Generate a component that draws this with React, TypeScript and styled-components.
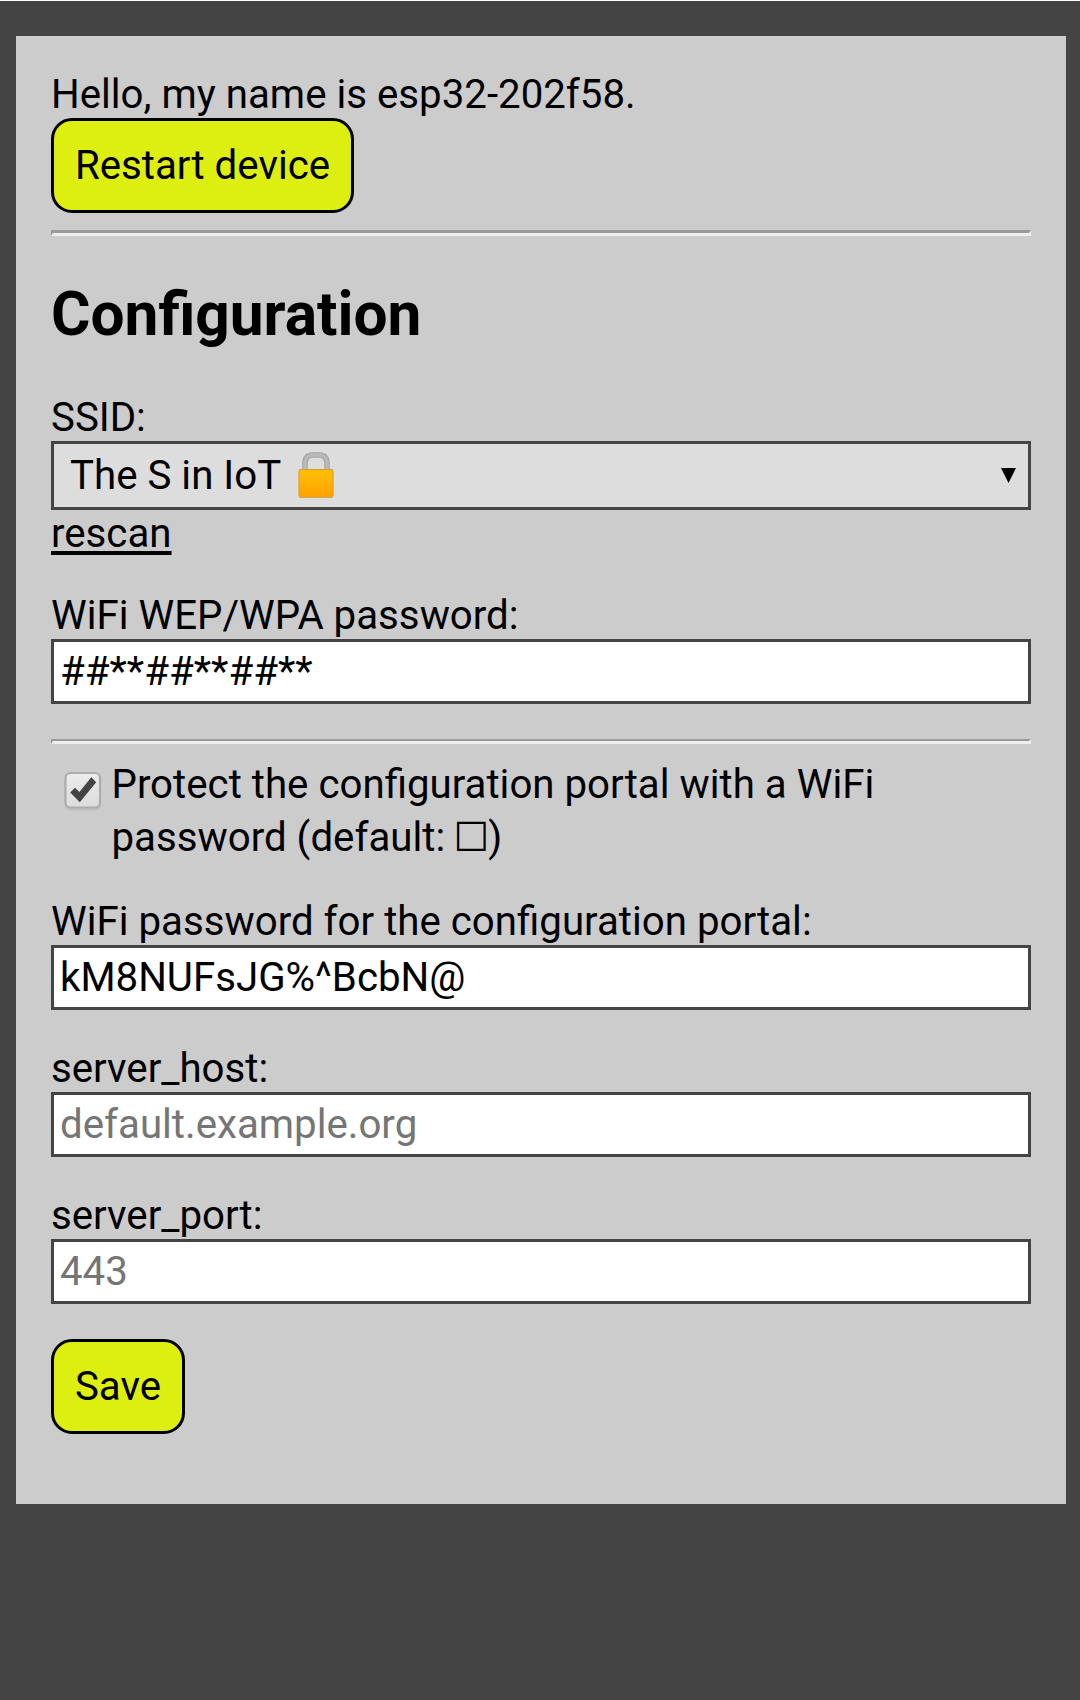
import React, { useState } from "react";
import styled, { createGlobalStyle, css } from "styled-components";

const GlobalStyle = createGlobalStyle`
  * { box-sizing: border-box; }
  body {
    margin: 0;
    background: #444;
    color: #000;
    font-family: Roboto, "Noto Sans", sans-serif;
    font-size: 40.24px;
    line-height: 48px;
  }
`;

const Page = styled.div`
  min-height: 1700px;
  border-top: 1px solid #fff;
  padding: 35px 14px 196px 16px;
`;

const Panel = styled.main`
  height: 1468px;
  padding: 35px 35px 0;
  background: #ccc;
`;

const Greeting = styled.div`
  height: 47px;
`;

const Button = styled.button<{ $width: number }>`
  display: flex;
  align-items: center;
  justify-content: center;
  width: ${(p) => p.$width}px;
  height: 95px;
  padding: 1px 0 0;
  border: 3px solid #000;
  border-radius: 21px;
  background: #de1;
  color: #000;
  font: inherit;
  white-space: nowrap;
`;

const Rule = styled.hr<{ $thin?: boolean }>`
  height: ${(p) => (p.$thin ? 5 : 6)}px;
  margin: ${(p) => (p.$thin ? "35px 0 14px" : "17px 0 0")};
  border-style: solid;
  border-width: ${(p) => (p.$thin ? "2px 2px 3px" : "3px 2px")};
  border-color: #9a9a9a #eee #eee #9a9a9a;
`;

const Title = styled.h1`
  margin: 42px 0 43px;
  height: 73px;
  font-size: 60.4px;
  font-weight: 700;
  line-height: 73px;
`;

const Field = styled.div<{ $gap?: number }>`
  display: flex;
  flex-direction: column;
  margin-top: ${(p) => p.$gap ?? 0}px;
`;

const Label = styled.label`
  height: 47px;
`;

const boxed = css`
  width: 100%;
  border: 3px solid #444;
  border-radius: 0;
`;

const Input = styled.input`
  ${boxed}
  height: 65px;
  padding: 0 6px 1px;
  outline: 0;
  background: #fff;
  color: #000;
  font: inherit;
  &::placeholder { color: #757575; opacity: 1; }
`;

const Select = styled.div`
  ${boxed}
  display: flex;
  align-items: center;
  height: 69px;
  padding: 0 12px 0 16px;
  background: #ddd;
`;

const Network = styled.span`
  flex: 1;
  display: flex;
  align-items: center;
  gap: 17px;
  height: 48px;
  svg { margin-bottom: 2px; }
`;

const Rescan = styled.a`
  align-self: flex-start;
  height: 48px;
  color: #000;
  text-decoration: underline;
  text-decoration-thickness: 4px;
  text-underline-offset: 4px;
  text-decoration-skip-ink: none;
`;

const CheckRow = styled.label`
  display: flex;
  gap: 9.5px;
  padding-left: 12px;
  line-height: 53px;
`;

const Checkbox = styled.button`
  flex: none;
  width: 39px;
  height: 42px;
  margin-top: 13px;
  padding: 0;
  border: 0;
  background: none;
  svg { display: block; }
`;

const BallotBox = styled.span`
  display: inline-block;
  width: 33px;
  height: 53px;
  vertical-align: top;
  font-family: "DejaVu Sans", sans-serif;
  text-indent: -2px;
`;

function LockIcon() {
  return (
    <svg width="36" height="46" viewBox="0 0 36 46">
      <defs>
        <linearGradient id="lockBody" x1="0" y1="0" x2="0" y2="1">
          <stop offset="0" stopColor="#ffc107" />
          <stop offset="1" stopColor="#ffa000" />
        </linearGradient>
      </defs>
      <path d="M7 19V11.5Q7 3 15 3h6Q29 3 29 11.5V19" fill="none" stroke="#a3a3a3" strokeWidth="5.4" />
      <path d="M7 19V11.5Q7 3 15 3h6Q29 3 29 11.5V19" fill="none" stroke="#b9b9b9" strokeWidth="3.4" />
      <rect x="1" y="17.6" width="34" height="27.6" rx="1.6" fill="url(#lockBody)" stroke="#dda027" strokeWidth="1.2" />
    </svg>
  );
}

function ArrowIcon() {
  return (
    <svg width="15" height="15" viewBox="0 0 15 15">
      <path d="M0 0h15L7.5 15z" />
    </svg>
  );
}

function CheckIcon({ checked }: { checked: boolean }) {
  return (
    <svg width="39" height="42" viewBox="0 0 39 42">
      <defs>
        <linearGradient id="checkFill" x1="0" y1="0" x2="0" y2="1">
          <stop offset="0" stopColor="#ececec" />
          <stop offset="1" stopColor="#dcdcdc" />
        </linearGradient>
      </defs>
      <rect x="1.5" y="4" width="36.5" height="35.5" rx="6" fill="#bdbdbd" />
      <rect x="2.5" y="2" width="34.5" height="34.5" rx="5" fill="url(#checkFill)" stroke="#adadad" strokeWidth="2.2" />
      {checked && <path d="M7.2 21.4L12 16.7l4.4 4.2L28.3 6.2l4.9 5L16.8 31.3z" fill="#444" />}
    </svg>
  );
}

export default function App() {
  const [locked, setLocked] = useState(true);
  return (
    <>
      <GlobalStyle />
      <Page>
        <Panel>
          <Greeting>Hello, my name is esp32-202f58.</Greeting>
          <Button $width={303}>Restart device</Button>
          <Rule />
          <Title>Configuration</Title>
          <Field>
            <Label>SSID:</Label>
            <Select role="combobox" aria-expanded="false">
              <Network>
                The S in IoT
                <LockIcon />
              </Network>
              <ArrowIcon />
            </Select>
            <Rescan>rescan</Rescan>
          </Field>
          <Field $gap={34}>
            <Label htmlFor="wpa">WiFi WEP/WPA password:</Label>
            <Input id="wpa" defaultValue="##**##**##**" />
          </Field>
          <Rule $thin />
          <CheckRow>
            <Checkbox type="button" role="checkbox" aria-checked={locked} onClick={() => setLocked(!locked)}>
              <CheckIcon checked={locked} />
            </Checkbox>
            <span>
              Protect the configuration portal with a WiFi
              <br />
              password (default: <BallotBox>☐</BallotBox>)
            </span>
          </CheckRow>
          <Field $gap={34}>
            <Label htmlFor="portal">WiFi password for the configuration portal:</Label>
            <Input id="portal" defaultValue="kM8NUFsJG%^BcbN@" spellCheck={false} />
          </Field>
          <Field $gap={35}>
            <Label htmlFor="host">server_host:</Label>
            <Input id="host" placeholder="default.example.org" />
          </Field>
          <Field $gap={35}>
            <Label htmlFor="port">server_port:</Label>
            <Input id="port" placeholder="443" />
          </Field>
          <Field $gap={35}>
            <Button $width={134}>Save</Button>
          </Field>
        </Panel>
      </Page>
    </>
  );
}
